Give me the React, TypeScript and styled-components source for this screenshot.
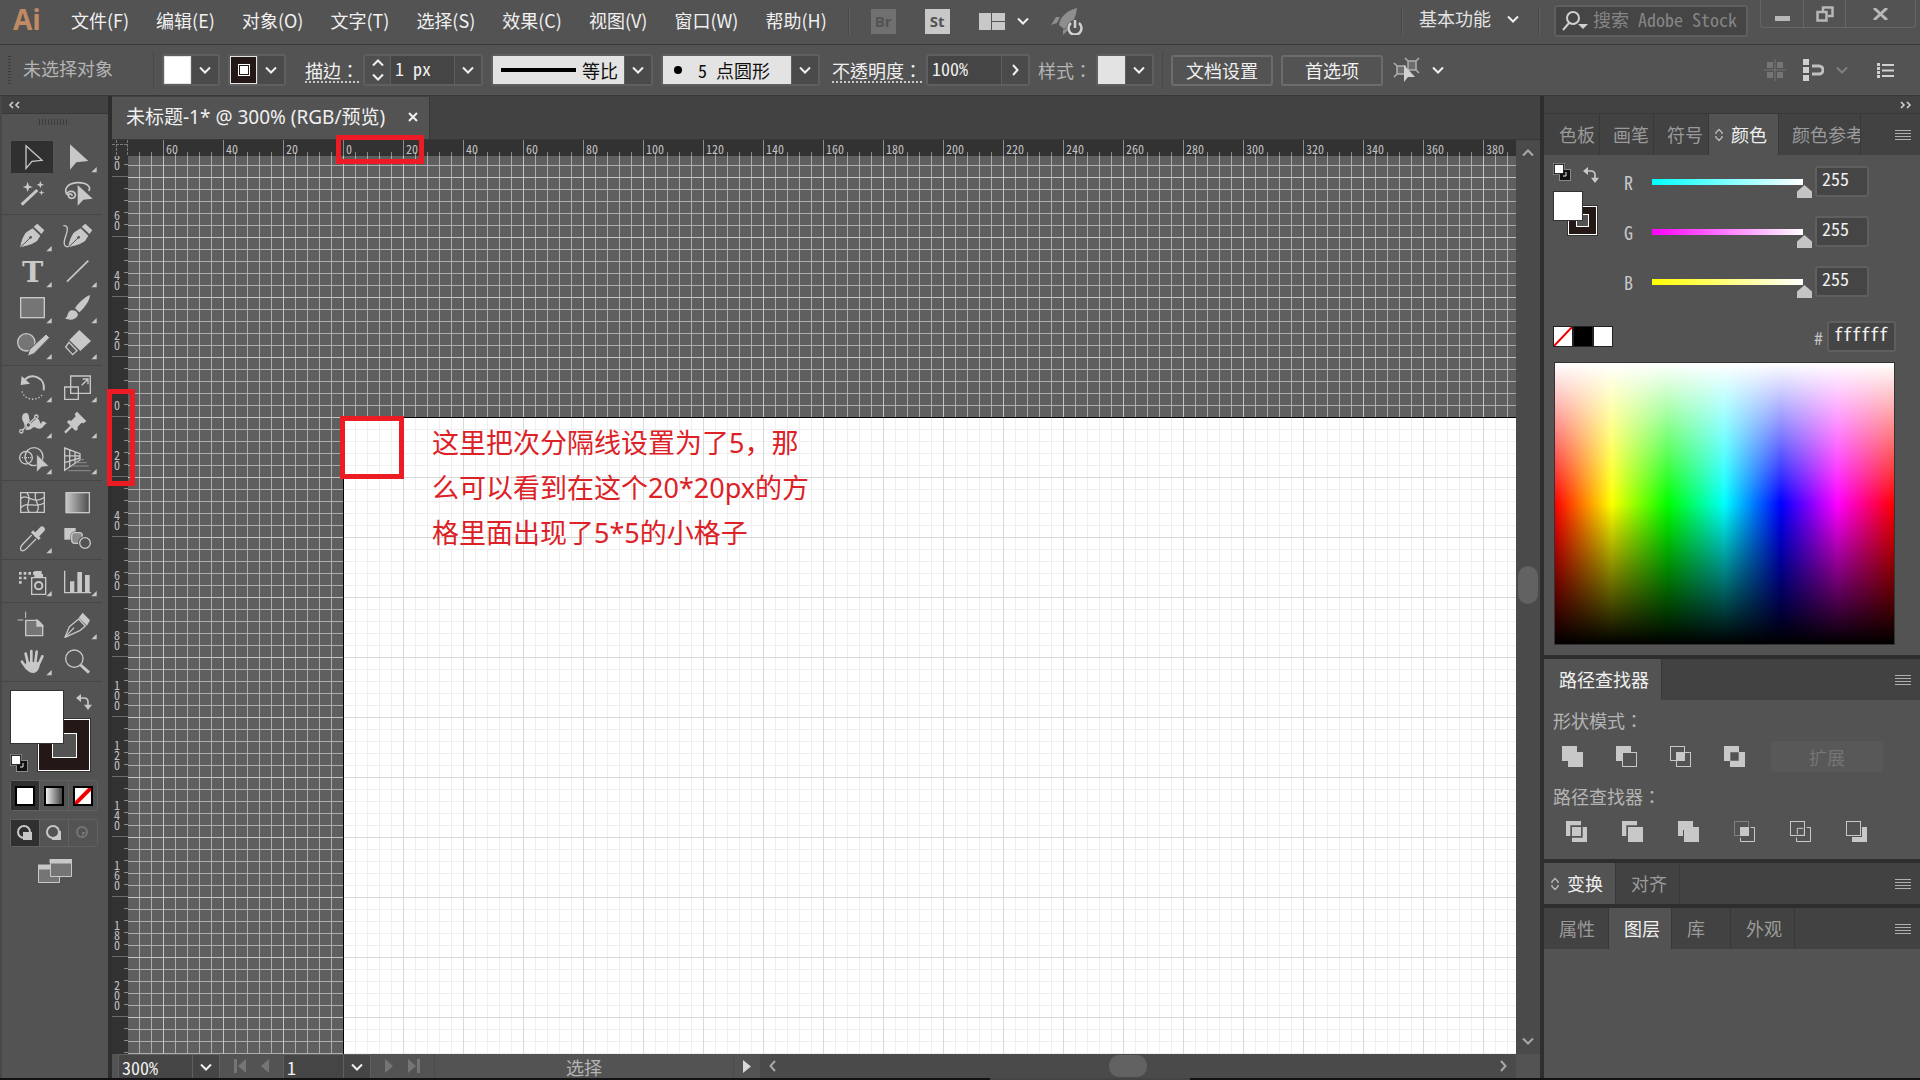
import React, { useLayoutEffect, useRef, useState } from 'react';
import styled, { createGlobalStyle, css } from 'styled-components';

const C = {
  bar: '#535353',
  dark: '#424242',
  field: '#454545',
  edge: '#5f5f5f',
  line: '#383838',
  icon: '#c8c8c8',
  text: '#f0f0f0',
  dim: '#b4b4b4',
  mute: '#9a9a9a',
  light: '#e3e3e3',
  stroke: '#231815',
  red: '#ed1c24',
};

const hei = '"Noto Sans", "Noto Sans CJK SC", sans-serif';
const heiCjk = '"Noto Sans CJK SC", sans-serif';
const song = '"Noto Sans Mono CJK SC", "Liberation Mono", "Noto Sans CJK SC", monospace';
const songLabel = '"Noto Sans CJK TC", "Noto Sans CJK SC", sans-serif';

const GlobalStyle = createGlobalStyle`
  *, *::before, *::after { box-sizing: border-box; }
  body { margin: 0; background: #111; overflow: hidden; }
  button, input, select { font: inherit; color: inherit; margin: 0; padding: 0; border: 0; background: none; border-radius: 0; outline: 0; }
  button { cursor: pointer; }
  select { appearance: none; }
  svg { display: block; flex: none; }
`;

const Shell = styled.div`
  display: flex;
  flex-direction: column;
  height: 100vh;
  background: ${C.bar};
  color: ${C.text};
  font: 18px/24px ${hei};
  white-space: nowrap;
`;

/* ---------- menu bar ---------- */

const MenuBar = styled.header`
  display: flex;
  align-items: flex-start;
  height: 45px;
  flex: none;
  border-bottom: 1px solid ${C.line};
`;

const Logo = styled.div`
  width: 71px;
  padding-left: 13px;
  color: #c08a64;
  font: bold 28px/38px "Open Sans", sans-serif;
`;

const Menu = styled.nav`
  display: flex;
  gap: 27px;
  padding-top: 8px;
  font-family: ${heiCjk};
`;

const MenuItem = styled.button`
  height: 24px;
`;

const Rule = styled.span<{ $gap?: number }>`
  width: 2px;
  height: 28px;
  flex: none;
  align-self: center;
  margin: 0 ${p => p.$gap ?? 8}px;
  background: #494949;
  border-right: 1px solid #5e5e5e;
`;

const AppButtons = styled.div`
  display: flex;
  align-items: center;
  height: 42px;
`;

const AppTile = styled.button<{ $on?: boolean }>`
  width: 25px;
  height: 25px;
  margin-right: 29px;
  background: ${p => (p.$on ? '#c8c8c8' : '#707070')};
  color: #535353;
  font: bold 15px/25px "Open Sans", sans-serif;
`;

const IconButton = styled.button<{ $after?: number }>`
  display: flex;
  align-items: center;
  gap: 12px;
  margin-right: ${p => p.$after ?? 0}px;
`;

const Spacer = styled.div`
  flex: 1;
`;

const Workspace = styled.label`
  display: flex;
  align-items: center;
  gap: 12px;
  height: 38px;
  padding-bottom: 4px;
  margin-left: 8px;
  margin-right: 11px;
  select { width: 76px; color: ${C.light}; }
`;

const Search = styled.label`
  display: flex;
  align-items: center;
  width: 194px;
  height: 32px;
  margin: 5px 12px 0 6px;
  padding-left: 6px;
  gap: 5px;
  border: 2px solid ${C.edge};
  border-radius: 3px;
  background: ${C.field};
  font: 18px/24px ${song};
  input { width: 100%; min-width: 0; padding-bottom: 4px; }
  input::placeholder { color: #858585; opacity: 1; }
`;

const WindowButtons = styled.div`
  display: flex;
  height: 28px;
  margin-right: 4px;
  border: 1px solid #666;
  border-top: 0;
  border-radius: 0 0 4px 4px;
`;

const WindowButton = styled.button<{ $wide?: boolean }>`
  display: grid;
  place-items: center;
  width: ${p => (p.$wide ? 70 : 42)}px;
  & + & { border-left: 1px solid #666; }
`;

/* ---------- options bar ---------- */

const OptionsBar = styled.section`
  display: flex;
  align-items: center;
  gap: 8px;
  height: 51px;
  flex: none;
  border-bottom: 1px solid ${C.line};
  font-family: ${song};
`;

const Grip = styled.span`
  width: 3px;
  height: 28px;
  margin-left: 8px;
  background: repeating-linear-gradient(#3c3c3c 0 1px, transparent 1px 3px);
`;

const Selection = styled.span`
  width: 122px;
  margin-left: 4px;
  padding-bottom: 5px;
  color: ${C.dim};
`;

const Thin = styled.span`
  width: 1px;
  height: 38px;
  background: #494949;
`;

const Field = styled.div<{ $lead?: number; $dotted?: boolean }>`
  display: flex;
  align-items: center;
  gap: 4px;
  margin-left: ${p => p.$lead ?? 0}px;
  label {
    height: 25px;
    color: ${p => (p.$dotted ? C.text : C.dim)};
    border-bottom: 2px dotted ${p => (p.$dotted ? '#c8c8c8' : 'transparent')};
    font-family: ${songLabel};
  }
`;

const Control = styled.div<{ $width: number }>`
  display: flex;
  align-items: stretch;
  width: ${p => p.$width}px;
  height: 32px;
  border: 2px solid ${C.edge};
  border-radius: 3px;
  background: ${C.field};
  input { flex: 1; min-width: 0; padding: 0 4px 5px; }
`;

const Arrow = styled.button`
  display: grid;
  place-items: center;
  width: 27px;
  flex: none;
  border-left: 1px solid ${C.edge};
  background: #4a4a4a;
`;

const Stepper = styled.div`
  display: grid;
  width: 26px;
  background: #4f4f4f;
  border-right: 1px solid ${C.edge};
  button { display: grid; place-items: center; }
`;

const Swatch = styled.button<{ $color: string }>`
  display: grid;
  place-items: center;
  flex: 1;
  border: 1px solid ${C.light};
  background: ${p => p.$color};
`;

const StrokeDot = styled.span`
  width: 10px;
  height: 10px;
  border: 1px solid ${C.stroke};
  outline: 1px solid #fff;
  background: #fff;
`;

const Face = styled.label`
  display: flex;
  align-items: center;
  justify-content: space-between;
  flex: 1;
  padding: 0 6px 0 8px;
  background: ${C.light};
  color: #111;
`;

const PushButton = styled.button<{ $off?: boolean }>`
  width: ${p => (p.$off ? 112 : 102)}px;
  height: 31px;
  border-radius: 3px;
  ${p =>
    p.$off
      ? css`background: #585858; color: #757575;`
      : css`border: 2px solid #6c6c6c; color: ${C.text};`}
`;

const RightIcons = styled.div`
  display: flex;
  align-items: center;
  gap: 17px;
  margin-right: 26px;
`;

/* ---------- main ---------- */

const Main = styled.main`
  display: flex;
  flex: 1;
  min-height: 0;
`;

const ToolPanel = styled.aside`
  width: 112px;
  flex: none;
  border-left: 2px solid #484848;
  border-right: 4px solid #2e2e2e;
`;

const CollapseBar = styled.div<{ $right?: boolean }>`
  display: flex;
  align-items: center;
  justify-content: ${p => (p.$right ? 'flex-end' : 'flex-start')};
  height: 18px;
  padding: 0 8px 0 6px;
  background: ${C.dark};
  border-bottom: 1px solid ${C.line};
`;

const ToolGrip = styled.div`
  width: 28px;
  height: 6px;
  margin: 5px 0 14px 37px;
  background: repeating-linear-gradient(90deg, #3a3a3a 0 1px, transparent 1px 3px);
`;

const ToolGroup = styled.div`
  display: grid;
  grid-template-columns: 45px 45px;
  padding: 0 0 3px 9px;
  margin: 0 6px 3px 0;
  border-bottom: 1px solid #464646;
`;

const ToolButton = styled.button<{ $on?: boolean }>`
  width: 45px;
  height: 36px;
  background: ${p => (p.$on ? 'linear-gradient(#303030, #303030) 0 2px / 42px 32px no-repeat' : 'none')};
`;

const PaintArea = styled.div`
  position: relative;
  height: 82px;
  margin: 8px 16px 0 8px;
`;

const FillBox = styled.button<{ $size: number; $top?: number }>`
  position: absolute;
  left: 0;
  top: ${p => p.$top ?? 0}px;
  width: ${p => p.$size}px;
  height: ${p => p.$size}px;
  background: #fff;
  border: 1px solid #333;
`;

const StrokeBox = styled.button<{ $size: number }>`
  position: absolute;
  right: 2px;
  bottom: 1px;
  display: grid;
  place-items: center;
  width: ${p => p.$size}px;
  height: ${p => p.$size}px;
  background: ${C.stroke};
  border: 1px solid #fff;
  outline: 1px solid #333;
  &::after {
    content: '';
    width: 50%;
    height: 50%;
    border: 1px solid #fff;
    background: ${C.bar};
  }
`;

const Corner = styled.button<{ $at: 'tr' | 'bl' }>`
  position: absolute;
  ${p => (p.$at === 'tr' ? 'top: 4px; right: 0;' : 'bottom: 0; left: 0;')}
`;

const Segments = styled.div`
  display: flex;
  width: 88px;
  margin: 8px 0 0 8px;
  border: 1px solid #616161;
  border-radius: 3px;
`;

const Segment = styled.button<{ $on?: boolean; $tall?: boolean }>`
  display: grid;
  place-items: center;
  flex: 1;
  height: ${p => (p.$tall ? 29 : 26)}px;
  background: ${p => (p.$on ? '#303030' : 'none')};
  & + & { border-left: 1px solid #616161; }
`;

const Chip = styled.span<{ $bg: string }>`
  width: 20px;
  height: 20px;
  border: 2px solid #000;
  background: ${p => p.$bg};
`;

const ScreenMode = styled.button`
  display: block;
  margin: 12px 0 0 36px;
`;

/* ---------- document ---------- */

const Doc = styled.section`
  position: relative;
  display: flex;
  flex-direction: column;
  flex: 1;
  min-width: 0;
`;

const DocTabs = styled.div`
  display: flex;
  height: 44px;
  flex: none;
  background: ${C.dark};
  border-top: 1px solid ${C.dark};
  border-bottom: 1px solid ${C.line};
`;

const DocTab = styled.div`
  display: flex;
  align-items: center;
  gap: 22px;
  padding: 0 10px 2px 14px;
  border-right: 1px solid ${C.line};
  background: ${C.bar};
  font-size: 19px;
`;

const Stage = styled.div`
  display: grid;
  grid-template-columns: 16px minmax(0, 1fr) 24px;
  grid-template-rows: 16px minmax(0, 1fr);
  flex: 1;
  min-height: 0;
  background: #323232;
`;

const RulerH = styled.div`
  display: flex;
  overflow: hidden;
  padding-left: 35px;
  background: repeating-linear-gradient(90deg, #8a8a8a 0 1px, transparent 1px 12px) -1px 12px / 1920px 4px repeat-x #323232;
`;

const RulerCell = styled.span`
  width: 60px;
  flex: none;
  padding-left: 2px;
  border-left: 1px solid #8a8a8a;
  color: #c0c0c0;
  font: 12px/18px ${song};
`;

const RulerV = styled.div`
  display: flex;
  flex-direction: column;
  overflow: hidden;
  background: repeating-linear-gradient(#8a8a8a 0 1px, transparent 1px 12px) 12px 8px / 4px 1200px repeat-y #323232;
`;

const RulerMark = styled.span<{ $cut?: boolean }>`
  display: flex;
  align-items: flex-end;
  height: ${p => (p.$cut ? 21 : 60)}px;
  flex: none;
  overflow: hidden;
  padding: 0 0 6px 2px;
  border-bottom: 1px solid #6c6c6c;
  color: #c0c0c0;
  font: 12px/10px ${song};
  span { width: 7px; white-space: normal; word-break: break-all; }
`;

const gridLines = (minor: string, major: string, x: number, y: number) => css`
  background-image:
    linear-gradient(90deg, ${major} 1px, transparent 1px),
    linear-gradient(${major} 1px, transparent 1px),
    linear-gradient(90deg, ${minor} 1px, transparent 1px),
    linear-gradient(${minor} 1px, transparent 1px);
  background-size: 60px 60px, 60px 60px, 12px 12px, 12px 12px;
  background-position: ${x}px ${y}px;
`;

const Canvas = styled.div`
  position: relative;
  overflow: hidden;
  background-color: #5f5f5f;
  ${gridLines('#acacac', '#c4c4c4', 35, 21)}
`;

const Artboard = styled.div`
  position: absolute;
  inset: 261px 0 0 215px;
  border: solid #000;
  border-width: 1px 0 0 1px;
  background-color: #fff;
  background-origin: border-box;
  ${gridLines('#efefef', '#d9d9d9', 0, 0)}
`;

const Note = styled.p`
  position: absolute;
  left: 88px;
  top: 2px;
  width: 390px;
  margin: 0;
  color: #dc2227;
  font: 27px/45px ${hei};
  white-space: pre-line;
`;

const Mark = styled.div<{ $x: number; $y: number; $w: number; $h: number }>`
  position: absolute;
  left: ${p => p.$x}px;
  top: ${p => p.$y}px;
  width: ${p => p.$w}px;
  height: ${p => p.$h}px;
  border: 5px solid ${C.red};
  z-index: 1;
`;

const ScrollV = styled.div`
  display: flex;
  flex-direction: column;
  align-items: center;
  grid-row: 1 / 3;
  grid-column: 3;
  padding: 7px 0;
  background: #4a4a4a;
`;

const Thumb = styled.span<{ $w: number; $h: number }>`
  width: ${p => p.$w}px;
  height: ${p => p.$h}px;
  border-radius: 10px;
  background: #626262;
`;

const Grow = styled.span<{ $n: number }>`
  flex: ${p => p.$n};
`;

const StatusBar = styled.footer`
  display: flex;
  height: 24px;
  flex: none;
  padding-left: 6px;
  font-family: ${song};
`;

const Pick = styled.label<{ $width: number }>`
  display: flex;
  width: ${p => p.$width}px;
  border: 1px solid ${C.edge};
  border-bottom: 0;
  background: ${C.field};
  select { flex: 1; min-width: 0; padding-left: 3px; }
`;

const PickArrow = styled.span`
  display: grid;
  place-items: center;
  width: 27px;
  border-left: 1px solid ${C.edge};
`;

const Pager = styled.div`
  display: flex;
  align-items: center;
  justify-content: center;
  gap: 15px;
  width: 63px;
`;

const StatusText = styled.div`
  width: 300px;
  padding-top: 2px;
  border: solid #4b4b4b;
  border-width: 0 1px;
  color: ${C.dim};
  text-align: center;
  line-height: 22px;
`;

const StatusPlay = styled.button`
  display: grid;
  place-items: center;
  width: 26px;
`;

const ScrollH = styled.div`
  display: flex;
  align-items: center;
  flex: 1;
  padding: 0 7px;
  background: #4a4a4a;
`;

const ScrollCorner = styled.span`
  width: 24px;
`;

/* ---------- right panels ---------- */

const Panels = styled.aside`
  display: flex;
  flex-direction: column;
  width: 380px;
  flex: none;
  border-left: 4px solid #2e2e2e;
`;

const Panel = styled.section`
  border-bottom: 4px solid #2e2e2e;
`;

const Tabs = styled.div`
  display: flex;
  height: 41px;
  background: ${C.dark};
  color: ${C.mute};
`;

const Tab = styled.button<{ $on?: boolean; $width: number; $left?: number }>`
  display: flex;
  align-items: center;
  gap: 8px;
  width: ${p => p.$width}px;
  padding-left: ${p => p.$left ?? 15}px;
  overflow: hidden;
  border-right: 1px solid ${C.line};
  white-space: nowrap;
  ${p => p.$on && css`background: ${C.bar}; color: ${C.text};`}
`;

const PanelMenu = styled.button`
  margin: 0 9px 0 auto;
`;

const ColorBody = styled.div`
  padding: 8px 24px 10px 9px;
`;

const ColorTop = styled.div`
  display: flex;
  gap: 25px;
`;

const MiniPaint = styled.div`
  position: relative;
  width: 46px;
  height: 73px;
`;

const Sliders = styled.div`
  display: grid;
  grid-template-columns: 28px 163px 54px;
  row-gap: 18px;
  height: 132px;
  padding-top: 3px;
  font-family: ${song};
  label { line-height: 32px; color: ${C.icon}; }
`;

const Range = styled.input<{ $from: string }>`
  appearance: none;
  align-self: end;
  width: 160px;
  height: 19px;
  background: linear-gradient(90deg, ${p => p.$from}, #fff) 0 0 / 151px 6px no-repeat;
  &::-webkit-slider-runnable-track { height: 19px; }
  &::-webkit-slider-thumb {
    appearance: none;
    width: 15px;
    height: 13px;
    margin-top: 6px;
    background: #c4c4c4;
    clip-path: polygon(50% 0, 100% 50%, 100% 100%, 0 100%, 0 50%);
  }
`;

const NumberBox = styled.input<{ $width: number }>`
  && {
    width: ${p => p.$width}px;
    height: 31px;
    padding: 0 5px 7px;
    border: 2px solid ${C.edge};
    border-radius: 3px;
    background: ${C.field};
  }
`;

const HexRow = styled.div`
  display: flex;
  align-items: center;
  margin: 26px 0 10px;
  font-family: ${song};
  label { margin: 0 4px 0 auto; color: ${C.icon}; }
`;

const Quick = styled.button<{ $bg: string }>`
  width: 20px;
  height: 21px;
  border: 1px solid #222;
  background: ${p => p.$bg};
`;

const Spectrum = styled.div`
  height: 283px;
  margin: 0 1px;
  border: 1px solid #333;
  background:
    linear-gradient(#fff, rgba(255, 255, 255, 0) 50%, rgba(0, 0, 0, 0) 50%, #000),
    linear-gradient(90deg, #f00, #ff0, #0f0, #0ff, #00f, #f0f, #f00);
`;

const PathBody = styled.div`
  padding: 10px 9px 3px;
  color: ${C.dim};
  font-family: ${song};
`;

const PathLabel = styled.div`
  line-height: 20px;
  font-family: ${songLabel};
`;

const PathRow = styled.div<{ $lead: number; $gap: number; $pad: number }>`
  display: flex;
  align-items: center;
  gap: ${p => p.$gap}px;
  padding: ${p => p.$pad}px 0 14px ${p => p.$lead}px;
`;

const BottomEdge = styled.div`
  display: flex;
  justify-content: center;
  height: 2px;
  flex: none;
  background: #131113;
  span { width: 200px; margin-left: 260px; background: #444; }
`;

/* ---------- drawings ---------- */

const Chevron = ({ dir = 'down', color = '#f0f0f0', s = 12 }: { dir?: 'down' | 'up' | 'right' | 'left'; color?: string; s?: number }) => {
  const d = { down: 'M1 3.5 6 8.5 11 3.5', up: 'M1 8.5 6 3.5 11 8.5', right: 'M4 1 8.5 6 4 11', left: 'M8 1 3.5 6 8 11' }[dir];
  return (
    <svg width={s} height={s} viewBox="0 0 12 12" fill="none" stroke={color} strokeWidth="2">
      <path d={d} />
    </svg>
  );
};

const Doubles = ({ right }: { right?: boolean }) => (
  <svg width="14" height="8" viewBox="0 0 14 8" fill="none" stroke="#d0d0d0" strokeWidth="1.6">
    <path d={right ? 'M3 1 6 4 3 7M9 1 12 4 9 7' : 'M5 1 2 4 5 7M11 1 8 4 11 7'} />
  </svg>
);

const Lines = () => (
  <svg width="16" height="12" viewBox="0 0 16 12" stroke="#b0b0b0">
    <path d="M0 1.5H16M0 4.5H16M0 7.5H16M0 10.5H16" />
  </svg>
);

const UpDown = () => (
  <svg width="8" height="14" viewBox="0 0 8 14" fill="none" stroke="#b8b8b8" strokeWidth="1.4">
    <path d="M1 6V4.500L4 1.500 7 4.500V6M1 8V9.500L4 12.500 7 9.500V8" />
  </svg>
);

const SwapIcon = () => (
  <svg width="16" height="16" viewBox="0 0 48 48" fill="none" stroke={C.icon} strokeWidth="5">
    <path d="M12 12H24Q36 12 36 24V34" />
    <path d="M0 12 15 0V24ZM24 32H48L36 48Z" fill={C.icon} stroke="none" />
  </svg>
);

const DefaultIcon = () => (
  <svg width="18" height="18" viewBox="0 0 54 54">
    <path d="M0 0H36V18H54V54H18V36H0Z" fill="#8a8a8a" />
    <path d="M21 21H51V51H21Z" fill="#111" />
    <path d="M30 39H39V27" fill="none" stroke="#eee" strokeWidth="3" />
    <rect x="4" y="4" width="28" height="28" fill="#fff" stroke="#111" strokeWidth="3" />
  </svg>
);

const NoneIcon = ({ w, h, sw }: { w: number; h: number; sw: number }) => (
  <svg width={w} height={h} viewBox={`0 0 ${w} ${h}`}>
    <path d={`M0 ${h} ${w} 0`} stroke="#e00" strokeWidth={sw} />
  </svg>
);

type Tool = { name: string; badge?: boolean; on?: boolean; x: number; y: number; art: React.ReactNode };
const L = 33;
const R = 168;
const nib = (
  <>
    <path fill={C.icon} stroke="none" d="M61 475C63 458 70 440 79 430L98 418 121 440 111 456C100 465 80 470 61 475ZM101 413 112 404 133 424 124 435Z" />
    <path d="M63 473 90 447" stroke={C.bar} strokeWidth="3" />
    <circle cx="92" cy="445" r="4" fill={C.bar} stroke="none" />
  </>
);

const groups: Tool[][] = [
  [
    { name: '选择工具', on: true, x: L, y: 150, art: <path d="M78 170V238L96 217 126 214Z" /> },
    { name: '直接选择工具', badge: true, x: R, y: 150, art: <path fill={C.icon} stroke="none" d="M210 166V242L229 220 265 216Z" /> },
    {
      name: '魔棒工具', x: L, y: 258,
      art: (
        <>
          <path d="M65 347 112 303" strokeWidth="9" />
          <path fill={C.icon} stroke="none" d="M83 278 87 290 99 294 87 298 83 309 79 298 68 294 79 290ZM121 276 124 284 132 287 124 290 121 298 118 290 110 287 118 284ZM125 303 127 309 134 311 127 313 125 319 122 313 116 311 122 309Z" />
        </>
      ),
    },
    {
      name: '套索工具', x: R, y: 258,
      art: (
        <>
          <path d="M203 318C190 304 199 283 232 281 260 280 275 294 266 306M203 318C198 306 222 302 226 316 228 330 206 332 205 320 207 313 217 313 216 321" strokeWidth="5" />
          <path fill={C.icon} stroke="none" d="M233 288V350L250 332 278 329Z" />
        </>
      ),
    },
  ],
  [
    { name: '钢笔工具', badge: true, x: L, y: 387, art: nib },
    {
      name: '曲率工具', x: R, y: 387,
      art: (
        <>
          <path d="M190 410C208 408 202 428 197 442 189 464 192 476 206 472" />
          <g transform="translate(144 0)">{nib}</g>
        </>
      ),
    },
    {
      name: '文字工具', badge: true, x: L, y: 495,
      art: <text x="98" y="579" textAnchor="middle" fill={C.icon} stroke="none" fontFamily="DejaVu Serif" fontWeight="bold" fontSize="86">T</text>,
    },
    { name: '直线段工具', badge: true, x: R, y: 495, art: <path d="M201 578 265 515" strokeWidth="5" /> },
    { name: '矩形工具', badge: true, x: L, y: 603, art: <rect x="62" y="626" width="71" height="60" fill="#757575" /> },
    {
      name: '画笔工具', badge: true, x: R, y: 603,
      art: <path fill={C.icon} stroke="none" d="M270 618C256 622 232 645 225 658L238 670C252 658 270 635 270 618ZM195 688C206 684 200 668 214 664 227 661 238 674 232 682 224 694 208 695 195 688Z" />,
    },
    {
      name: 'Shaper 工具', badge: true, x: L, y: 711,
      art: (
        <>
          <circle cx="79" cy="760" r="26" fill="#757575" />
          <path fill={C.icon} stroke={C.bar} strokeWidth="3" d="M82 802 89 781 138 735 149 746 102 794Z" />
        </>
      ),
    },
    {
      name: '橡皮擦工具', badge: true, x: R, y: 711,
      art: (
        <>
          <path fill={C.icon} stroke="none" d="M238 723 273 756 241 786 208 753Z" />
          <path d="M207 760 197 774 218 797 231 785Z" />
        </>
      ),
    },
  ],
  [
    {
      name: '旋转工具', badge: true, x: L, y: 30,
      art: (
        <>
          <path d="M72 64C98 38 138 58 131 94" strokeWidth="6" />
          <path fill={C.icon} stroke="none" d="M65 51 62 78 90 74Z" />
          <path d="M67 99C76 127 118 127 129 103" strokeLinecap="round" strokeDasharray="0 10" strokeWidth="5" />
        </>
      ),
    },
    {
      name: '比例缩放工具', badge: true, x: R, y: 30,
      art: <path d="M212 51H271V103H212ZM194 84H235V121H194ZM245 79 262 62M248 60H264V76" />,
    },
    {
      name: '宽度工具', badge: true, x: L, y: 138,
      art: (
        <>
          <path fill={C.icon} stroke="none" d="M67 182C64 168 72 159 82 163 90 170 84 184 94 188 102 186 105 178 114 180 121 184 118 194 124 194 124 184 134 184 141 196 134 190 132 206 120 209 110 210 106 202 98 206 90 214 76 216 72 206 76 196 70 190 67 182Z" />
          <path d="M64 217 108 173" stroke={C.bar} strokeWidth="8" />
          <path d="M64 217 108 173" />
          <g fill={C.bar}><circle cx="64" cy="217" r="5" /><circle cx="85" cy="198" r="7" /><circle cx="109" cy="173" r="5" /></g>
        </>
      ),
    },
    {
      name: '操控变形工具', badge: true, x: R, y: 138,
      art: (
        <>
          <path fill={C.icon} stroke="none" d="M231 158 259 186 251 193 245 191 233 203 233 212 226 215 201 190 205 184 214 185 227 172 224 165Z" />
          <path d="M195 221 214 202" strokeWidth="7" />
        </>
      ),
    },
    {
      name: '形状生成器工具', badge: true, x: L, y: 246,
      art: (
        <>
          <circle cx="78" cy="296" r="19" />
          <circle cx="102" cy="293" r="27" />
          <path d="M66 296H96" strokeDasharray="3 3" />
          <path fill={C.icon} stroke={C.bar} strokeWidth="2" d="M110 286V340L125 324 147 322Z" />
        </>
      ),
    },
    {
      name: '透视网格工具', badge: true, x: R, y: 246,
      art: (
        <>
          <path d="M194 267 240 284V303L194 334ZM209 273V324M225 279V313M194 290 240 291M194 311 240 297" />
          <path d="M236 302H252M228 311H260M218 321H266M205 335H272" stroke="#8e8e8e" strokeWidth="3" />
        </>
      ),
    },
  ],
  [
    {
      name: '网格工具', x: L, y: 375,
      art: <path d="M62 401H133V460H62ZM62 419C80 400 100 440 133 415M62 446C86 424 104 450 133 432M80 401C100 422 70 440 88 460M108 401C96 424 126 436 110 460" />,
    },
    {
      name: '渐变工具', x: R, y: 375,
      art: (
        <>
          <defs><linearGradient id="tool-grad"><stop offset="0" stopColor="#c8c8c8" /><stop offset="1" stopColor="#4c4c4c" /></linearGradient></defs>
          <rect x="198" y="401" width="70" height="60" fill="url(#tool-grad)" />
        </>
      ),
    },
    {
      name: '吸管工具', badge: true, x: L, y: 483,
      art: (
        <>
          <path d="M111 527 126 511" strokeWidth="17" strokeLinecap="round" />
          <path d="M96 517 119 540" strokeWidth="9" />
          <path d="M95 528 66 558C60 565 61 573 64 574 68 578 76 573 80 568L108 540" />
        </>
      ),
    },
    {
      name: '混合工具', x: R, y: 483,
      art: (
        <>
          <rect x="193" y="507" width="34" height="35" fill={C.icon} stroke="none" />
          <rect x="215" y="521" width="32" height="32" rx="9" fill="#8a8a8a" stroke={C.bar} strokeWidth="7" />
          <rect x="215" y="521" width="32" height="32" rx="9" fill="#8a8a8a" />
          <circle cx="255" cy="552" r="21" fill={C.bar} stroke="none" />
          <circle cx="255" cy="552" r="16" />
        </>
      ),
    },
  ],
  [
    {
      name: '符号喷枪工具', badge: true, x: L, y: 612,
      art: (
        <>
          <path d="M95 656H137V706H95Z" />
          <circle cx="116" cy="680" r="11" strokeWidth="6" />
          <path fill={C.icon} stroke="none" d="M103 636H125V645H129V655H103Z" />
          <path d="M57 643H110M57 657H82M57 670H68" strokeWidth="8" strokeDasharray="8 6" />
        </>
      ),
    },
    {
      name: '柱形图工具', badge: true, x: R, y: 612,
      art: (
        <>
          <path d="M194 635V701H273" />
          <path fill={C.icon} stroke="none" d="M210 667H223V701H210ZM232 639H246V701H232ZM255 648H269V701H255Z" />
        </>
      ),
    },
  ],
  [
    {
      name: '画板工具', x: L, y: 741,
      art: (
        <>
          <path d="M77 758V777M53 783H70" strokeWidth="3" />
          <path d="M77 784H113L128 799V830H77Z" fill="#757575" />
          <path d="M111 784 128 801H111Z" fill={C.icon} />
        </>
      ),
    },
    {
      name: '切片工具', badge: true, x: R, y: 741,
      art: (
        <>
          <path d="M195 835 208 803 236 780 256 801 241 814Z" strokeLinejoin="round" />
          <path d="M195 835 222 806" />
          <path fill={C.icon} stroke="none" d="M236 776 248 761 270 784 261 800Z" />
        </>
      ),
    },
    {
      name: '抓手工具', badge: true, x: L, y: 39,
      art: (
        <>
          <path d="M84 104 77 74M94 100V66M106 100 110 68M116 106 127 82M80 118 66 98" strokeWidth="8" strokeLinecap="round" />
          <path fill={C.icon} stroke="none" d="M80 98 118 100C122 116 112 132 100 132 86 132 80 124 74 112Z" />
        </>
      ),
    },
    {
      name: '缩放工具', x: R, y: 39,
      art: (
        <>
          <circle cx="223" cy="89" r="26" />
          <path d="M242 108 267 131" strokeWidth="9" />
        </>
      ),
    },
  ],
];

const ToolCell = ({ tool }: { tool: Tool }) => (
  <ToolButton $on={tool.on} aria-label={tool.name} aria-pressed={!!tool.on}>
    <svg width="45" height="36" viewBox={`${tool.x} ${tool.y} 135 108`} fill="none" stroke={C.icon} strokeWidth="4">
      {tool.art}
      {tool.badge && <path d={`M${tool.x + 122} ${tool.y + 84}V${tool.y + 100}H${tool.x + 106}Z`} fill={C.icon} stroke="none" />}
    </svg>
  </ToolButton>
);

const OverlapIcon = ({ kind }: { kind: string }) => {
  const a = <rect x="1.500" y="1.500" width="42" height="42" />;
  const b = <rect x="19.500" y="19.500" width="42" height="42" />;
  const f = { fill: C.icon, stroke: 'none' };
  const art: Record<string, React.ReactNode> = {
    联集: <path {...f} d="M0 0H45V18H63V63H18V45H0Z" />,
    减去顶层: <><path {...f} d="M0 0H45V18H18V45H0Z" />{b}</>,
    交集: <>{a}{b}<path {...f} d="M18 18H45V45H18Z" /></>,
    差集: <path {...f} fillRule="evenodd" d="M0 0H45V18H63V63H18V45H0ZM19 19V44H44V19Z" />,
    分割: <><path {...f} d="M0 0H45V13H13V45H0ZM50 18H63V63H18V50H50Z" /><path {...f} d="M18 18H45V45H18Z" /></>,
    修边: <><path {...f} d="M0 0H45V13H13V45H0Z" /><path {...f} d="M18 18H63V63H18Z" /></>,
    合并: <><path {...f} d="M0 0H45V18H63V63H18V45H0Z" /><path d="M16.500 27V46" stroke={C.bar} /></>,
    裁剪: <><g stroke="#808080">{a}</g><path d="M50 19.500H61.500V61.500H19.500V50" /><path {...f} d="M18 18H45V45H18Z" /></>,
    轮廓: <>{a}<path d="M50 19.500H61.500V61.500H19.500V50M22 40V22H40M43 26V43H26" /></>,
    减去后方对象: <>{a}<path {...f} d="M48 18H63V63H18V48H48Z" /></>,
  };
  return (
    <svg width="21" height="21" viewBox="0 0 63 63" fill="none" stroke={C.icon} strokeWidth="3">
      {art[kind]}
    </svg>
  );
};

/* ---------- screen ---------- */

/* Canvas size, so that the rulers carry only the marks that fit. */
function useSize() {
  const ref = useRef<HTMLDivElement>(null);
  const [size, setSize] = useState({ w: 0, h: 0 });
  useLayoutEffect(() => {
    const el = ref.current;
    if (!el) return;
    const read = () => setSize({ w: el.clientWidth, h: el.clientHeight });
    read();
    const watch = new ResizeObserver(read);
    watch.observe(el);
    return () => watch.disconnect();
  }, []);
  return { ref, size };
}

const marks = (count: number, zero: number) =>
  Array.from({ length: Math.max(0, count) }, (_, i) => Math.abs(i - zero) * 20);

const menus = ['文件(F)', '编辑(E)', '对象(O)', '文字(T)', '选择(S)', '效果(C)', '视图(V)', '窗口(W)', '帮助(H)'];
const channels = [
  { name: 'R', from: '#0ff' },
  { name: 'G', from: '#f0f' },
  { name: 'B', from: '#ff0' },
];

export default function App() {
  const { ref, size } = useSize();
  const across = marks(Math.ceil((size.w - 35) / 60), 3);
  const down = marks(Math.floor((size.h - 21) / 60) + 1, 4);
  return (
    <Shell>
      <GlobalStyle />
      <MenuBar>
        <Logo>Ai</Logo>
        <Menu aria-label="主菜单">
          {menus.map(m => <MenuItem key={m}>{m}</MenuItem>)}
        </Menu>
        <AppButtons>
          <Rule $gap={21} />
          <AppTile>Br</AppTile>
          <AppTile $on>St</AppTile>
          <IconButton aria-label="排列文档" $after={22}>
            <svg width="26" height="17" viewBox="0 0 26 17" fill="#c8c8c8">
              <path d="M0 0H12V17H0ZM13 0H26V8H13ZM13 9H26V17H13Z" />
            </svg>
            <Chevron />
          </IconButton>
          <IconButton aria-label="GPU 性能">
            <svg width="32" height="27" viewBox="0 0 32 27" fill="none">
              <path d="M26 0C15 3 9 9 8 17L13 21C21 17 25 10 26 0ZM9 9 5 9 0 17 6 15ZM12 22 12 27 16 23 16 20Z" fill="#8e8e8e" />
              <circle cx="24" cy="20" r="8" fill={C.bar} />
              <path d="M20 15A6.500 6.500 0 1 0 28 15M24 12V20" stroke="#d0d0d0" strokeWidth="2.500" />
            </svg>
          </IconButton>
        </AppButtons>
        <Spacer />
        <AppButtons>
          <Rule />
          <Workspace>
            <select aria-label="工作区"><option>基本功能</option></select>
            <Chevron />
          </Workspace>
          <Rule />
        </AppButtons>
        <Search>
          <svg width="26" height="22" viewBox="0 0 26 22" fill="none" stroke="#d0d0d0" strokeWidth="2">
            <circle cx="11" cy="8" r="6" />
            <path d="M7 13 1 20" />
            <path d="M16 14H26L21 19Z" fill="#d0d0d0" stroke="none" />
          </svg>
          <input aria-label="搜索 Adobe Stock" placeholder="搜索 Adobe Stock" />
        </Search>
        <WindowButtons>
          <WindowButton aria-label="最小化"><svg width="15" height="16"><path d="M0 10H15V15H0Z" fill="#b8b8b8" /></svg></WindowButton>
          <WindowButton aria-label="还原">
            <svg width="18" height="16" viewBox="0 0 18 16" fill="none" stroke="#b8b8b8" strokeWidth="2.500">
              <path d="M7 5V1.500H16.500V10H12M1.500 6H10.500V14.500H1.500Z" />
            </svg>
          </WindowButton>
          <WindowButton $wide aria-label="关闭">
            <svg width="15" height="12" viewBox="0 0 15 12" stroke="#b8b8b8" strokeWidth="3"><path d="M1 0 14 12M14 0 1 12" /></svg>
          </WindowButton>
        </WindowButtons>
      </MenuBar>

      <OptionsBar>
        <Grip />
        <Selection>未选择对象</Selection>
        <Thin />
        <Control $width={58}>
          <Swatch $color="#fff" aria-label="填色" />
          <Arrow aria-label="填色选项"><Chevron /></Arrow>
        </Control>
        <Control $width={58}>
          <Swatch $color={C.stroke} aria-label="描边颜色"><StrokeDot /></Swatch>
          <Arrow aria-label="描边选项"><Chevron /></Arrow>
        </Control>
        <Field $lead={11} $dotted>
          <label htmlFor="stroke-width">描边：</label>
          <Control $width={120}>
            <Stepper>
              <button aria-label="增加"><Chevron dir="up" /></button>
              <button aria-label="减少"><Chevron /></button>
            </Stepper>
            <input id="stroke-width" defaultValue="1 px" />
            <Arrow aria-label="描边粗细"><Chevron /></Arrow>
          </Control>
        </Field>
        <Control $width={162}>
          <Face>
            <svg width="75" height="4"><path d="M0 0H75V4H0Z" /></svg>
            <select aria-label="变量宽度配置文件"><option>等比</option></select>
          </Face>
          <Arrow aria-label="配置文件列表"><Chevron /></Arrow>
        </Control>
        <Control $width={159}>
          <Face>
            <svg width="12" height="10"><circle cx="7" cy="5" r="4" /></svg>
            <select aria-label="画笔定义"><option>5 点圆形</option></select>
            <i />
          </Face>
          <Arrow aria-label="画笔列表"><Chevron /></Arrow>
        </Control>
        <Field $lead={4} $dotted>
          <label htmlFor="opacity">不透明度：</label>
          <Control $width={104}>
            <input id="opacity" defaultValue="100%" />
            <Arrow aria-label="不透明度滑块"><Chevron dir="right" /></Arrow>
          </Control>
        </Field>
        <Field>
          <label htmlFor="style">样式：</label>
          <Control $width={58}>
            <Swatch id="style" $color={C.light} />
            <Arrow aria-label="样式列表"><Chevron /></Arrow>
          </Control>
        </Field>
        <Thin />
        <PushButton>文档设置</PushButton>
        <PushButton>首选项</PushButton>
        <IconButton aria-label="选择类似对象">
          <svg width="29" height="26" viewBox="4 0 29 26" fill="none" stroke="#b0b0b0" strokeWidth="1.500">
            <path d="M10 9H18V17H10ZM7 6 10 9M7 20 10 17M21 4H29V13H21ZM18 1 21 4M32 1 29 4M32 16 29 13" fill="#6c6c6c" />
            <path d="M17 8V25L21 20H28Z" fill="#d0d0d0" stroke="none" />
          </svg>
          <Chevron />
        </IconButton>
        <Spacer />
        <RightIcons>
          <IconButton aria-label="对齐到像素网格">
            <svg width="22" height="22" viewBox="0 0 22 22" fill="#757575">
              <path d="M3 3H9V9H3ZM13 3H19V9H13ZM3 13H9V19H3ZM13 13H19V19H13ZM10.500 0H11.500V22H10.500ZM0 10.500H22V11.500H0Z" />
            </svg>
          </IconButton>
          <IconButton aria-label="对齐选项" $after={12}>
            <svg width="21" height="22" viewBox="0 0 21 22" fill="#d0d0d0">
              <path d="M0 0H6V6H0ZM0 8H6V14H0ZM0 16H6V22H0Z" />
              <path d="M9 7H16A4 4 0 0 1 16 15H9" fill="none" stroke="#c0c0c0" strokeWidth="3" />
            </svg>
            <Chevron color="#808080" />
          </IconButton>
          <IconButton aria-label="控制栏菜单">
            <svg width="17" height="16" viewBox="0 0 17 16" fill="#d0d0d0">
              <path d="M0 1H3V4H0ZM0 5H3V8H0ZM0 9H3V12H0ZM0 13H3V16H0ZM5 2H17V4H5ZM5 7.500H17V9.500H5ZM5 13H17V15H5Z" />
            </svg>
          </IconButton>
        </RightIcons>
      </OptionsBar>

      <Main>
        <ToolPanel>
          <CollapseBar><Doubles /></CollapseBar>
          <ToolGrip />
          {groups.map((g, i) => (
            <ToolGroup key={i}>{g.map(t => <ToolCell key={t.name} tool={t} />)}</ToolGroup>
          ))}
          <PaintArea>
            <StrokeBox $size={52} aria-label="描边" />
            <FillBox $size={54} aria-label="填色" />
            <Corner $at="tr" aria-label="互换填色和描边"><SwapIcon /></Corner>
            <Corner $at="bl" aria-label="默认填色和描边"><DefaultIcon /></Corner>
          </PaintArea>
          <Segments>
            <Segment $on $tall aria-label="颜色"><Chip $bg="#fff" /></Segment>
            <Segment $tall aria-label="渐变"><Chip $bg="linear-gradient(90deg, #eee, #444)" /></Segment>
            <Segment $tall aria-label="无"><Chip $bg="#fff"><NoneIcon w={16} h={16} sw={4} /></Chip></Segment>
          </Segments>
          <Segments>
            {['#c8c8c8', '#c8c8c8', '#757575'].map((c, i) => (
              <Segment key={i} $on={i === 0} aria-label={['正常绘图', '背面绘图', '内部绘图'][i]}>
                <svg width="18" height="18" viewBox="0 0 18 18" fill="none" stroke={c} strokeWidth="2">
                  {i === 1 && <path d="M7 7H16V16H7Z" fill={c} stroke="none" />}
                  <circle cx="8" cy="8" r={i === 2 ? 5 : 6} fill={i === 1 ? C.bar : 'none'} />
                  {i === 0 && <path d="M7 8H16V16H7Z" fill={c} stroke="none" />}
                  {i === 2 && <path d="M8 8H12L8 12Z" fill={c} stroke="none" />}
                </svg>
              </Segment>
            ))}
          </Segments>
          <ScreenMode aria-label="更改屏幕模式">
            <svg width="34" height="25" viewBox="0 0 34 25" stroke={C.icon} fill="#757575">
              <path d="M.5 6.500H21.500V23.500H.5Z" /><path d="M0 6H21V10H0Z" fill={C.icon} />
              <path d="M12.500 .5H33.500V17.500H12.500Z" /><path d="M12 0H34V4H12Z" fill={C.icon} />
            </svg>
          </ScreenMode>
        </ToolPanel>

        <Doc>
          <DocTabs>
            <DocTab>
              未标题-1* @ 300% (RGB/预览)
              <IconButton aria-label="关闭文档">
                <svg width="12" height="12" viewBox="0 0 12 12" stroke="#f0f0f0" strokeWidth="2"><path d="M2 2 10 10M10 2 2 10" /></svg>
              </IconButton>
            </DocTab>
          </DocTabs>
          <Stage>
            <svg width="16" height="16" stroke="#7a7a7a"><path d="M0 4.500H16M4.500 0V16M15.500 0V16" strokeDasharray="3 1" /></svg>
            <RulerH>{across.map((n, i) => <RulerCell key={i}>{n}</RulerCell>)}</RulerH>
            <ScrollV>
              <Chevron dir="up" color="#a8a8a8" />
              <Grow $n={407} />
              <Thumb $w={20} $h={38} />
              <Grow $n={431} />
              <Chevron color="#a8a8a8" />
            </ScrollV>
            <RulerV>{down.map((n, i) => <RulerMark key={i} $cut={i === 0}><span>{n}</span></RulerMark>)}</RulerV>
            <Canvas ref={ref}>
              <Artboard>
                <Note>{'这里把次分隔线设置为了5，那\n么可以看到在这个20*20px的方\n格里面出现了5*5的小格子'}</Note>
              </Artboard>
              <Mark $x={212} $y={260} $w={64} $h={63} />
            </Canvas>
          </Stage>
          <Mark $x={224} $y={39} $w={88} $h={29} />
          <Mark $x={-5} $y={293} $w={28} $h={97} />
          <StatusBar>
            <Pick $width={102}>
              <select aria-label="缩放比例"><option>300%</option></select>
              <PickArrow><Chevron /></PickArrow>
            </Pick>
            <Pager>
              <svg width="12" height="14" fill="#757575"><path d="M0 0H3V14H0ZM12 0V14L4 7Z" /></svg>
              <svg width="8" height="14" fill="#757575"><path d="M8 0V14L0 7Z" /></svg>
            </Pager>
            <Pick $width={88}>
              <select aria-label="画板"><option>1</option></select>
              <PickArrow><Chevron /></PickArrow>
            </Pick>
            <Pager>
              <svg width="8" height="14" fill="#757575"><path d="M0 0V14L8 7Z" /></svg>
              <svg width="12" height="14" fill="#757575"><path d="M9 0H12V14H9ZM0 0V14L8 7Z" /></svg>
            </Pager>
            <StatusText>选择</StatusText>
            <StatusPlay aria-label="状态选项"><svg width="8" height="13" fill="#d8d8d8"><path d="M0 0V13L8 6.500Z" /></svg></StatusPlay>
            <ScrollH>
              <Chevron dir="left" color="#a8a8a8" />
              <Grow $n={331} />
              <Thumb $w={38} $h={22} />
              <Grow $n={352} />
              <Chevron dir="right" color="#a8a8a8" />
            </ScrollH>
            <ScrollCorner />
          </StatusBar>
        </Doc>

        <Panels>
          <CollapseBar $right><Doubles right /></CollapseBar>
          <Panel>
            <Tabs>
              <Tab $width={56}>色板</Tab>
              <Tab $width={54} $left={13}>画笔</Tab>
              <Tab $width={55} $left={13}>符号</Tab>
              <Tab $width={70} $left={6} $on><UpDown />颜色</Tab>
              <Tab $width={82} $left={13}>颜色参考</Tab>
              <PanelMenu aria-label="面板菜单"><Lines /></PanelMenu>
            </Tabs>
            <ColorBody>
              <ColorTop>
                <MiniPaint>
                  <StrokeBox $size={29} aria-label="描边" />
                  <FillBox $size={30} $top={28} aria-label="填色" />
                  <Corner $at="tr" aria-label="互换填色和描边"><SwapIcon /></Corner>
                  <DefaultIcon />
                </MiniPaint>
                <Sliders>
                  {channels.map(c => (
                    <React.Fragment key={c.name}>
                      <label htmlFor={`range-${c.name}`}>{c.name}</label>
                      <Range id={`range-${c.name}`} type="range" min={0} max={255} defaultValue={255} $from={c.from} />
                      <NumberBox $width={54} aria-label={`${c.name} 值`} defaultValue="255" />
                    </React.Fragment>
                  ))}
                </Sliders>
              </ColorTop>
              <HexRow>
                <Quick $bg="#fff" aria-label="无"><NoneIcon w={18} h={19} sw={2} /></Quick>
                <Quick $bg="#000" aria-label="黑色" />
                <Quick $bg="#fff" aria-label="白色" />
                <label htmlFor="hex">#</label>
                <NumberBox id="hex" $width={69} defaultValue="ffffff" />
              </HexRow>
              <Spectrum role="img" aria-label="色谱" />
            </ColorBody>
          </Panel>
          <Panel>
            <Tabs>
              <Tab $width={118} $on>路径查找器</Tab>
              <PanelMenu aria-label="面板菜单"><Lines /></PanelMenu>
            </Tabs>
            <PathBody>
              <PathLabel>形状模式：</PathLabel>
              <PathRow $lead={9} $gap={26} $pad={11}>
                {['联集', '减去顶层', '交集', '差集'].map((k, i) => (
                  <IconButton key={k} aria-label={k} $after={i < 3 ? 7 : 0}><OverlapIcon kind={k} /></IconButton>
                ))}
                <PushButton $off disabled>扩展</PushButton>
              </PathRow>
              <PathLabel>路径查找器：</PathLabel>
              <PathRow $lead={13} $gap={35} $pad={15}>
                {['分割', '修边', '合并', '裁剪', '轮廓', '减去后方对象'].map(k => <IconButton key={k} aria-label={k}><OverlapIcon kind={k} /></IconButton>)}
              </PathRow>
            </PathBody>
          </Panel>
          <Panel>
            <Tabs>
              <Tab $width={72} $left={7} $on><UpDown />变换</Tab>
              <Tab $width={64}>对齐</Tab>
              <PanelMenu aria-label="面板菜单"><Lines /></PanelMenu>
            </Tabs>
          </Panel>
          <Tabs>
            <Tab $width={65}>属性</Tab>
            <Tab $width={63} $on>图层</Tab>
            <Tab $width={59}>库</Tab>
            <Tab $width={64}>外观</Tab>
            <PanelMenu aria-label="面板菜单"><Lines /></PanelMenu>
          </Tabs>
        </Panels>
      </Main>
      <BottomEdge><span /></BottomEdge>
    </Shell>
  );
}
